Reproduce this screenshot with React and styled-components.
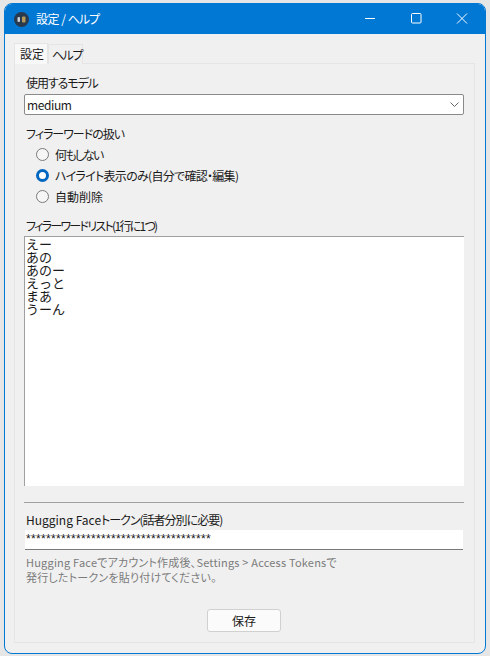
import React from 'react';
import styled, { createGlobalStyle } from 'styled-components';

const GlobalStyle = createGlobalStyle`
  html, body {
    margin: 0;
    padding: 0;
    background: #e6e6e6;
  }
  * {
    box-sizing: border-box;
  }
`;

const Screen = styled.div`
  width: 490px;
  height: 656px;
  padding: 3px 4px 2px 4px;
  font-family: "Noto Sans CJK JP", "Noto Sans", sans-serif;
  font-size: 12px;
  font-feature-settings: "palt";
  color: #1a1a1a;
  overflow: hidden;
`;

const Win = styled.div`
  height: 651px;
  display: flex;
  flex-direction: column;
  background: #f0f0f0;
  border: 1px solid #0078d4;
  border-radius: 8px;
  overflow: hidden;
`;

const TitleBar = styled.div`
  height: 30px;
  flex: none;
  display: flex;
  align-items: center;
  background: #0078d4;
  color: #fff;
  padding-left: 9px;
`;

const AppIcon = styled.svg`
  width: 15px;
  height: 15px;
  margin-right: 7px;
`;

const TitleText = styled.div`
  flex: 1;
  font-size: 12px;
  line-height: 16px;
  letter-spacing: -0.5px;
`;

const WinButton = styled.svg`
  width: 46px;
  height: 30px;
  flex: none;
`;

const Body = styled.div`
  flex: 1;
  display: flex;
  flex-direction: column;
  padding: 9px 9px 10px 9px;
  min-height: 0;
`;

const Tabs = styled.div`
  display: flex;
  height: 21px;
  flex: none;
`;

const Tab = styled.div`
  width: ${(p) => (p.$active ? '34px' : '35px')};
  height: ${(p) => (p.$active ? '21px' : '20px')};
  margin-top: ${(p) => (p.$active ? '0' : '1px')};
  padding-left: ${(p) => (p.$active ? '5px' : '3px')};
  background: ${(p) => (p.$active ? '#f8f8f8' : '#f0f0f0')};
  border: 1px solid #e5e5e5;
  border-bottom: none;
  font-size: 12px;
  line-height: 20px;
  letter-spacing: ${(p) => (p.$active ? '0' : '-1.5px')};
  position: relative;
  z-index: 1;
`;

const Panel = styled.div`
  flex: 1;
  margin-top: -1px;
  margin-right: 1px;
  border: 1px solid #e5e5e5;
  display: flex;
  flex-direction: column;
  padding: 11px 10px 9px 9px;
  min-height: 0;
`;

const Label = styled.div`
  font-size: 12px;
  line-height: 16px;
  padding-left: 2px;
  letter-spacing: ${(p) => p.$track || 0}px;
`;

const Narrow = styled.span`
  letter-spacing: -1px;
`;

const Select = styled.div`
  height: 21px;
  margin-top: 3px;
  background: #fff;
  border: 1px solid #8a8a8a;
  border-radius: 2px;
  display: flex;
  align-items: center;
  justify-content: space-between;
  padding: 0 4px 0 2px;
  font-size: 12px;
  letter-spacing: -0.4px;
`;

const Group = styled.div`
  margin-top: 11px;
  display: flex;
  flex-direction: column;
`;

const RadioList = styled.div`
  display: flex;
  flex-direction: column;
  padding: 2px 0 0 12px;
`;

const RadioRow = styled.div`
  height: 21px;
  display: flex;
  align-items: center;
  gap: 6px;
  font-size: 12px;
  letter-spacing: ${(p) => p.$track || 0}px;
`;

const RadioDot = styled.span`
  width: 13px;
  height: 13px;
  border-radius: 50%;
  flex: none;
  background: ${(p) => (p.$on ? '#fff' : '#f6f6f6')};
  border: ${(p) => (p.$on ? '3.5px solid #0067c0' : '1px solid #7a7a7a')};
`;

const WordLabel = styled(Label)`
  margin-top: 11px;
`;

const WordList = styled.div`
  height: 250px;
  margin-top: 2px;
  background: #fff;
  border: 1px solid #a0a0a0;
  border-bottom: none;
  border-right: none;
  padding: 0 0 0 1px;
  font-size: 13px;
  font-feature-settings: normal;
  line-height: 13px;
  white-space: pre;
`;

const Divider = styled.div`
  height: 1px;
  background: #a0a0a0;
  margin-top: 16px;
`;

const TokenLabel = styled(Label)`
  margin-top: 9px;
`;

const TokenInput = styled.div`
  height: 20px;
  margin: 2px 1px 0 1px;
  background: #fff;
  border-bottom: 1px solid #7a7a7a;
  padding: 0 1px;
  font-family: "Liberation Sans", sans-serif;
  font-size: 12px;
  line-height: 19px;
  letter-spacing: 0.33px;
  overflow: hidden;
`;

const Hint = styled.div`
  margin-top: 5px;
  font-size: 11px;
  line-height: 15px;
  letter-spacing: 0.2px;
  color: #7b7b7b;
  padding-left: 2px;
`;

const SaveRow = styled.div`
  display: flex;
  justify-content: center;
  margin-top: 24px;
`;

const SaveButton = styled.button`
  width: 74px;
  height: 23px;
  padding: 0;
  background: #fbfbfb;
  border: 1px solid #d0d0d0;
  border-radius: 3px;
  font: inherit;
  font-size: 12px;
  color: #1a1a1a;
`;

const words = 'えー\nあの\nあのー\nえっと\nまあ\nうーん';

const App = () => {
  return (
    <Screen>
      <GlobalStyle />
      <Win>
        <TitleBar>
          <AppIcon viewBox="0 0 15 15">
            <circle cx="7.5" cy="7.5" r="7.5" fill="#2a3a4e" />
            <rect x="3.5" y="5" width="2.5" height="5" rx="1" fill="#c9d2d8" />
            <rect x="8" y="4.5" width="3.5" height="6" rx="1" fill="#b89b5a" />
          </AppIcon>
          <TitleText>設定 / <Narrow>ヘルプ</Narrow></TitleText>
          <WinButton viewBox="0 0 46 30">
            <path d="M18 14.5h10" stroke="#fff" fill="none" />
          </WinButton>
          <WinButton viewBox="0 0 46 30">
            <rect x="18.5" y="9.500" width="9.500" height="9.500" rx="1" stroke="#fff" fill="none" />
          </WinButton>
          <WinButton viewBox="0 0 46 30">
            <path d="M18 9.500l10 10M28 9.500l-10 10" stroke="#fff" fill="none" />
          </WinButton>
        </TitleBar>
        <Body>
          <Tabs>
            <Tab $active>設定</Tab>
            <Tab>ヘルプ</Tab>
          </Tabs>
          <Panel>
            <Label $track={-1.1}>使用するモデル</Label>
            <Select>
              medium
              <svg width="9" height="5" viewBox="0 0 9 5">
                <path d="M.5.500l4 4 4-4" stroke="#666" fill="none" />
              </svg>
            </Select>
            <Group>
              <Label $track={-1}>フィラーワードの扱い</Label>
              <RadioList>
                <RadioRow $track={-1.8}><RadioDot />何もしない</RadioRow>
                <RadioRow $track={-0.7}><RadioDot $on />ハイライト表示のみ(自分で確認・編集)</RadioRow>
                <RadioRow><RadioDot />自動削除</RadioRow>
              </RadioList>
            </Group>
            <WordLabel $track={-1.7}>フィラーワードリスト(1行に1つ)</WordLabel>
            <WordList>{words}</WordList>
            <Divider />
            <TokenLabel>
              Hugging Face<Narrow>トークン(話者分別に必要)</Narrow>
            </TokenLabel>
            <TokenInput>{'*'.repeat(37)}</TokenInput>
            <Hint>
              Hugging Faceでアカウント作成後、Settings &gt; Access Tokensで
              <br />
              発行したトークンを貼り付けてください。
            </Hint>
            <SaveRow>
              <SaveButton>保存</SaveButton>
            </SaveRow>
          </Panel>
        </Body>
      </Win>
    </Screen>
  );
};

export default App;
